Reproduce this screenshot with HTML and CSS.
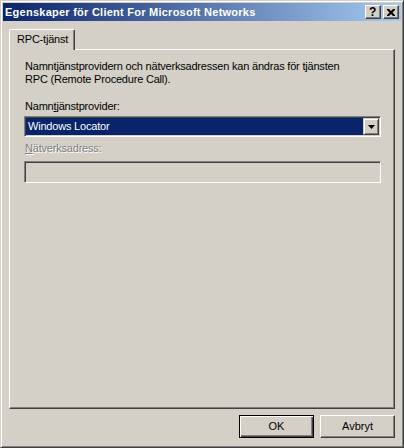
FILE: index.html
```html
<!DOCTYPE html>
<html lang="sv">

<head>
  <meta charset="UTF-8">
  <title>Egenskaper för Client For Microsoft Networks</title>
  <link rel="stylesheet" href="styles.css">
</head>

<body>
  <div class="window">
    <div class="titlebar">
      <span class="title">Egenskaper för Client For Microsoft Networks</span>
      <div class="caption-buttons">
        <span class="cbtn help">?</span>
        <span class="cbtn close">
          <svg width="8" height="7" viewBox="0 0 8 7">
            <path d="M0 0h2l2 2 2-2h2v1l-2.5 2.5L8 6v1H6L4 5 2 7H0V6l2.5-2.5L0 1z" fill="#000" />
          </svg>
        </span>
      </div>
    </div>

    <div class="content">
      <div class="tabs">
        <div class="tab">RPC-tjänst</div>
      </div>

      <div class="panel">
        <p class="intro">Namntjänstprovidern och nätverksadressen kan ändras för tjänsten RPC (Remote Procedure Call).</p>

        <div class="label">Namn<u>t</u>jänstprovider:</div>
        <div class="combo">
          <span class="combo-value">Windows Locator</span>
          <span class="combo-btn">
            <svg width="7" height="4" viewBox="0 0 7 4">
              <path d="M0 0h7L3.5 4z" fill="#000" />
            </svg>
          </span>
        </div>

        <div class="label disabled"><u>N</u>ätverksadress:</div>
        <div class="edit"></div>
      </div>

      <div class="buttons">
        <button class="btn default">OK</button>
        <button class="btn">Avbryt</button>
      </div>
    </div>
  </div>
</body>

</html>
```

FILE: styles.css
```css
html,
body {
  margin: 0;
  padding: 0;
  background: #d4d0c8;
}

body {
  font-family: "Liberation Sans", Arial, sans-serif;
  font-size: 11px;
  line-height: 13px;
  letter-spacing: -0.2px;
  color: #000;
}

.window {
  box-sizing: border-box;
  width: 404px;
  height: 448px;
  padding: 2px;
  display: flex;
  flex-direction: column;
  background: #d4d0c8;
  border: 1px solid;
  border-color: #d4d0c8 #404040 #404040 #d4d0c8;
  box-shadow: inset 1px 1px #fff, inset -1px -1px #808080;
}

/* caption */
.titlebar {
  height: 18px;
  display: flex;
  align-items: center;
  justify-content: space-between;
  padding-left: 2px;
  background: linear-gradient(to right, #0a246a, #a6caf0);
}

.title {
  color: #fff;
  font-weight: bold;
  line-height: 18px;
  letter-spacing: 0.25px;
  white-space: nowrap;
}

.caption-buttons {
  display: flex;
  gap: 2px;
  margin-right: 2px;
}

.cbtn {
  box-sizing: border-box;
  width: 16px;
  height: 14px;
  display: flex;
  align-items: center;
  justify-content: center;
  background: #d4d0c8;
  border: 1px solid;
  border-color: #fff #404040 #404040 #fff;
  box-shadow: inset -1px -1px #808080;
}

.help {
  font-weight: bold;
  font-size: 12px;
  line-height: 12px;
  padding-right: 1px;
}

/* dialog body */
.content {
  flex: 1;
  display: flex;
  flex-direction: column;
  padding: 8px 6px 0;
}

.tabs {
  display: flex;
  position: relative;
  z-index: 1;
}

.tab {
  box-sizing: border-box;
  height: 21px;
  margin-bottom: -1px;
  padding: 3px 6px 0 7px;
  background: #d4d0c8;
  border-left: 1px solid #fff;
  border-top: 1px solid #fff;
  border-right: 1px solid #404040;
  border-radius: 2px 2px 0 0;
  box-shadow: inset -1px 0 #808080;
}

.panel {
  flex: 1;
  padding: 10px 13px 0 14px;
  border: 1px solid;
  border-color: #fff #404040 #404040 #fff;
  box-shadow: inset -1px -1px #808080;
}

.intro {
  margin: 0 0 0 1px;
  max-width: 330px;
}

.label {
  margin: 14px 0 3px 1px;
}

.label.disabled {
  margin-top: 5px;
  margin-bottom: 6px;
  color: #808080;
  text-shadow: 1px 1px #fff;
}

.combo,
.edit {
  box-sizing: border-box;
  height: 21px;
  border: 1px solid;
  border-color: #808080 #fff #fff #808080;
  box-shadow: inset 1px 1px #404040, inset -1px -1px #d4d0c8;
}

.combo {
  display: flex;
  padding: 1px;
  background: #fff;
}

.combo-value {
  flex: 1;
  padding-left: 2px;
  line-height: 17px;
  color: #fff;
  background: #0a246a;
}

.combo-btn {
  box-sizing: border-box;
  width: 16px;
  height: 17px;
  display: flex;
  align-items: center;
  justify-content: center;
  background: #d4d0c8;
  border: 1px solid;
  border-color: #d4d0c8 #404040 #404040 #d4d0c8;
  box-shadow: inset 1px 1px #fff, inset -1px -1px #808080;
}

.edit {
  height: 22px;
  background: #d4d0c8;
}

/* OK / Avbryt */
.buttons {
  display: flex;
  justify-content: flex-end;
  gap: 6px;
  margin: 6px 0 7px;
}

.btn {
  box-sizing: border-box;
  width: 75px;
  height: 23px;
  padding: 0;
  font: inherit;
  color: #000;
  background: #d4d0c8;
  border: 1px solid;
  border-color: #fff #404040 #404040 #fff;
  box-shadow: inset -1px -1px #808080;
}

.btn.default {
  border-color: #000;
  box-shadow: inset 1px 1px #fff, inset -1px -1px #404040, inset -2px -2px #808080;
}
```
